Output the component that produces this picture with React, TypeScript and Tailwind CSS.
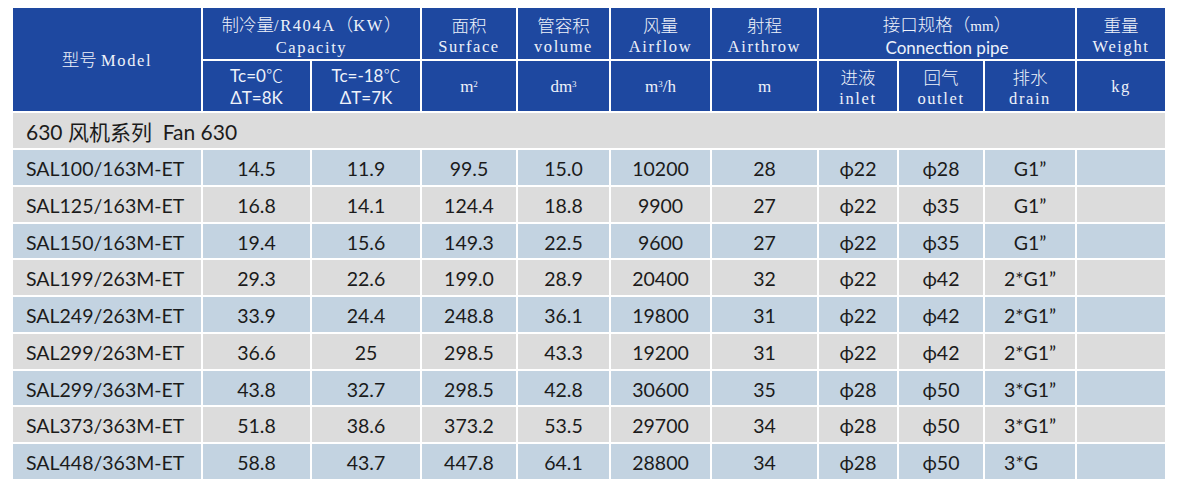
import React from "react";

const rows: string[][] = [
  ["SAL100/163M-ET", "14.5", "11.9", "99.5", "15.0", "10200", "28", "ϕ22", "ϕ28", "G1”"],
  ["SAL125/163M-ET", "16.8", "14.1", "124.4", "18.8", "9900", "27", "ϕ22", "ϕ35", "G1”"],
  ["SAL150/163M-ET", "19.4", "15.6", "149.3", "22.5", "9600", "27", "ϕ22", "ϕ35", "G1”"],
  ["SAL199/263M-ET", "29.3", "22.6", "199.0", "28.9", "20400", "32", "ϕ22", "ϕ42", "2*G1”"],
  ["SAL249/263M-ET", "33.9", "24.4", "248.8", "36.1", "19800", "31", "ϕ22", "ϕ42", "2*G1”"],
  ["SAL299/263M-ET", "36.6", "25", "298.5", "43.3", "19200", "31", "ϕ22", "ϕ42", "2*G1”"],
  ["SAL299/363M-ET", "43.8", "32.7", "298.5", "42.8", "30600", "35", "ϕ28", "ϕ50", "3*G1”"],
  ["SAL373/363M-ET", "51.8", "38.6", "373.2", "53.5", "29700", "34", "ϕ28", "ϕ50", "3*G1”"],
  ["SAL448/363M-ET", "58.8", "43.7", "447.8", "64.1", "28800", "34", "ϕ28", "ϕ50", "3*G"],
];

const widths = [190, 109, 110, 96, 93, 101, 107, 80, 86, 92, 90];

// header latin text: thin serif with wide tracking, close to the SimSun look
const en = "font-['Liberation_Serif',serif] text-[16.5px] tracking-[1.6px]";
const cjk = "font-['Noto_Sans_CJK_SC',sans-serif] text-[17.5px] font-light";
const sans = "font-['Lato',sans-serif] text-[17px]";
const head = "border-2 border-white bg-[#1e48a0] text-center align-middle font-normal leading-[22px] text-[#eef2fa]";

function Two({ zh, latin }: { zh: string; latin: string }) {
  return (
    <div className="pt-[4px]">
      <div className={cjk}>{zh}</div>
      <div className={en}>{latin}</div>
    </div>
  );
}

export default function App() {
  return (
    <div className="min-h-[486px] w-[1179px] bg-white pl-[11px] pt-[6px]">
      <table className="table-fixed border-collapse" style={{ width: 1156 }}>
        <colgroup>
          {widths.map((w, i) => (
            <col key={i} style={{ width: w }} />
          ))}
        </colgroup>
        <thead>
          <tr className="h-[53px]">
            <th rowSpan={2} className={head}>
              <span className={cjk}>型号</span> <span className={en}>Model</span>
            </th>
            <th colSpan={2} className={head}>
              <div className="pt-[4px]">
                <div>
                  <span className={cjk}>制冷量</span>
                  <span className={en}>/R404A</span>
                  <span className={cjk}>（</span>
                  <span className={en}>KW</span>
                  <span className={cjk}>）</span>
                </div>
                <div className={en}>Capacity</div>
              </div>
            </th>
            <th className={head}>
              <Two zh="面积" latin="Surface" />
            </th>
            <th className={head}>
              <Two zh="管容积" latin="volume" />
            </th>
            <th className={head}>
              <Two zh="风量" latin="Airflow" />
            </th>
            <th className={head}>
              <Two zh="射程" latin="Airthrow" />
            </th>
            <th colSpan={3} className={head}>
              <div className="pt-[4px]">
                <div>
                  <span className={cjk}>接口规格（</span>
                  <span className="font-['Liberation_Serif',serif] text-[15px]">mm</span>
                  <span className={cjk}>）</span>
                </div>
                <div className={sans}>Connection pipe</div>
              </div>
            </th>
            <th className={head}>
              <Two zh="重量" latin="Weight" />
            </th>
          </tr>
          <tr className="h-[52px]">
            <th className={head}>
              <div className={sans}>
                Tc=0<span className="font-['Noto_Sans_CJK_SC',sans-serif] font-light">℃</span>
              </div>
              <div className={sans}>ΔT=8K</div>
            </th>
            <th className={head}>
              <div className={sans}>
                Tc=-18<span className="font-['Noto_Sans_CJK_SC',sans-serif] font-light">℃</span>
              </div>
              <div className={sans}>ΔT=7K</div>
            </th>
            <th className={head}>
              <span className="font-['Liberation_Serif',serif] text-[17px]">
                m<sup className="text-[9px]">2</sup>
              </span>
            </th>
            <th className={head}>
              <span className="font-['Liberation_Serif',serif] text-[17px]">
                dm<sup className="text-[9px]">3</sup>
              </span>
            </th>
            <th className={head}>
              <span className="font-['Liberation_Serif',serif] text-[17px]">
                m<sup className="text-[9px]">3</sup>/h
              </span>
            </th>
            <th className={head}>
              <span className="font-['Liberation_Serif',serif] text-[17px]">m</span>
            </th>
            <th className={head}>
              <Two zh="进液" latin="inlet" />
            </th>
            <th className={head}>
              <Two zh="回气" latin="outlet" />
            </th>
            <th className={head}>
              <Two zh="排水" latin="drain" />
            </th>
            <th className={head}>
              <span className={en}>kg</span>
            </th>
          </tr>
        </thead>
        <tbody className="font-['Lato','Noto_Sans',sans-serif] text-[19.5px] text-[#1b1b1b]">
          <tr className="h-[37px]">
            <td colSpan={11} className="border-2 border-white bg-[#dcdcdc] pl-[13px] pt-[2px] align-middle text-[21px]">
              630 <span className="font-['Noto_Sans_CJK_SC',sans-serif]">风机系列</span>&nbsp; Fan 630
            </td>
          </tr>
          {rows.map((r, i) => (
            <tr key={i} className={i % 2 === 0 ? "h-[36.75px] bg-[#c3d3e1]" : "h-[36.75px] bg-[#dcdcdc]"}>
              {r.map((c, j) => (
                <td
                  key={j}
                  className={
                    j === 0
                      ? "border-2 border-white pl-[13px] pt-[3px] align-middle leading-none"
                      : c === "3*G"
                      ? "border-2 border-white pr-[18px] pt-[3px] text-center align-middle leading-none"
                      : "border-2 border-white pt-[3px] text-center align-middle leading-none"
                  }
                >
                  {c}
                </td>
              ))}
              <td className="border-2 border-white" />
            </tr>
          ))}
        </tbody>
      </table>
    </div>
  );
}
